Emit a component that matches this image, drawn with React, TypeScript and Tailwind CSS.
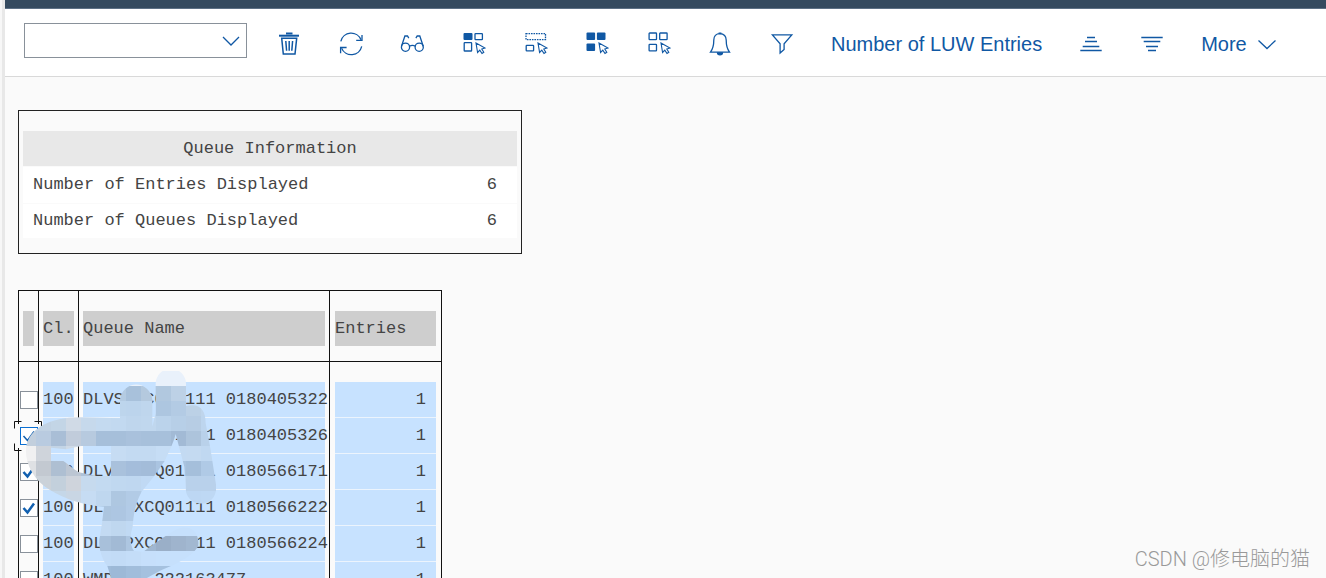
import type { ReactNode } from 'react'

interface QueueRow {
  id: string
  client: string
  name: string
  entries: number
  checked: boolean
  focused?: boolean
}

const summary = [
  { label: 'Number of Entries Displayed', value: 6 },
  { label: 'Number of Queues Displayed', value: 6 },
]

const queues: QueueRow[] = [
  { id: 'q1', client: '100', name: 'DLVSPXCQ01111 0180405322', entries: 1, checked: false },
  { id: 'q2', client: '100', name: 'DLVSPXCQ01111 0180405326', entries: 1, checked: true, focused: true },
  { id: 'q3', client: '100', name: 'DLVSPXCQ01111 0180566171', entries: 1, checked: true },
  { id: 'q4', client: '100', name: 'DLVSPXCQ01111 0180566222', entries: 1, checked: true },
  { id: 'q5', client: '100', name: 'DLVSPXCQ01111 0180566224', entries: 1, checked: false },
  { id: 'q6', client: '100', name: 'WMD    222163477', entries: 1, checked: false },
]

// one line per mosaic row, one colour per block, left to right
const mosaic = [
  'e9f1fb e9f1fb e9f1fb e9f1fb e9f1fb e9f1fb e9f1fb e9f1fb e9f1fb e9f1fb e9f1fb e9f1fb e9f1fb',
  'c8dff6 c8dff6 c8dff6 c8dff6 c8dff6 c8dff6 b4cbe2 a8c1db b4c9de b1c8df bdd1e6 bdd1e6 bdd1e6',
  'c8dff6 c8dff6 c8dff6 c8dff6 c8dff6 c8dff6 bdd5ec bcd4ec bfd6ed adc6e0 b3cbe4 bcd1e6 bfd5ec',
  'c4d4e4 c1d2e3 c3d5e6 d0dae6 c6d9ec c4daf0 c2d9f0 bfd6ed c0d7ee bbd3eb b7cfe7 b7cde4 bdd5ee',
  'c2cfdd b9cbe0 a9bed6 c1ccdb b7cadf a6bfda a6bfda a9c1dc a7c0db a7c0db a2bad5 adc4dc b9d1ea',
  'f0f0f1 cfd4db c3d4e5 cfdae6 c6daee c6dcf3 c6dcf3 c3daf2 c3daf2 c6ddf5 c3daf2 c4daf1 c0d8f1',
  'dfe1e4 c3c9d1 aebfd2 bcc6d3 aec2d9 a9c1dc a9c1dc a4bddb a3bcd9 aac4e1 a9c3df a5bfdb b0cae6',
  'd9dde2 cbd2d9 c3d0dc cfd4dc c6daee c3daf1 c0d8f0 bfd7f0 c0d9f4 c2daf4 c2daf4 b9d1eb b9d1eb',
  'c8d5e2 c8d5e2 c5d7e8 c9d6e4 c6dcf3 bfd7ef aec7e1 b2cbe6 bad4ef c2daf4 c2daf4 bdd7f3 bed8f4',
  'c2d9f1 c2d9f1 c2d9f1 c2d9f1 c2d9f1 acc5df adc6e2 b2cbe7 c2d9f1 c2d9f1 c2d9f1 c2d9f1 c2d9f1',
  'c2d9f1 c2d9f1 c2d9f1 c2d9f1 c2d9f1 c3daf2 bfd7ef c0d9f3 c6e0fc c6e0fc c6e0fc c6e0fc c6e0fc',
  'a5bdd7 a5bdd7 a5bdd7 a5bdd7 a5bdd7 a8c0da a2bad5 adc6e1 a0b7d1 9aafc8 9fb4cd a2b8d1 a2b8d1',
  'bcd5ef bcd5ef bcd5ef bcd5ef bcd5ef c3dcf7 c2dbf6 c4ddf8 c6dffb c6e0fc c6e0fc c6e0fc c6e0fc',
  '9fbbd9 9fbbd9 9fbbd9 9fbbd9 9fbbd9 9fbbd9 9db9d7 a1bddb a5c1df a5c1df a5c1df a5c1df a5c1df',
].map((line) => line.split(' '))

const cursorPath = 'M14 11l9 5-3.2 1 2 3.3-1.8 1.2-2.2-3.3-2.2 2.3z'

function Icon({ children }: { children: ReactNode }) {
  return (
    <svg viewBox="0 0 24 24" className="h-6 w-6 shrink-0" fill="none" stroke="currentColor" strokeWidth="1.3" aria-hidden="true">
      {children}
    </svg>
  )
}

function ToolButton({ label, children }: { label: string; children: ReactNode }) {
  return (
    <button type="button" aria-label={label} title={label} className="shrink-0 hover:text-[#0a6ed1]">
      <Icon>{children}</Icon>
    </button>
  )
}

function Toolbar() {
  return (
    <div className="flex h-[68px] items-center border-b border-[#d9d9d9] bg-white pt-0.5 pl-[19px] font-['Liberation_Sans',Arial,sans-serif] text-xl text-[#1058a4]">
      <div className="relative mb-1.5 h-[35px] w-[223px] shrink-0">
        <select aria-label="Command" className="block h-full w-full appearance-none border border-[#89919a] bg-white px-2 outline-none">
          <option value=""></option>
        </select>
        <span className="pointer-events-none absolute top-1.5 right-1">
          <Icon>
            <path d="M4 8l8 8 8-8" />
          </Icon>
        </span>
      </div>

      <div className="ml-[30px] flex min-w-0 items-center gap-[37px]">
        <div className="flex w-[517px] shrink-0 items-center justify-between">
          <ToolButton label="Delete">
            <path d="M9 1.5h6.5" strokeWidth="2" />
            <path d="M2 3.7h20" strokeWidth="2" />
            <path d="M4.7 6.2h15L18 22H6.3z" strokeWidth="1.5" />
            <path d="M8.8 9l.8 9.8M12.2 9v9.8M15.6 9l-.8 9.8" strokeWidth="1.5" />
          </ToolButton>
          <ToolButton label="Refresh">
            <path d="M1.8 9.3A10.6 10.6 0 0 1 22 7.8M22.7 14.3A10.6 10.6 0 0 1 2.6 16.2" />
            <path d="M23 3v5.3h-5.8M1.6 21.3V15.5h6" />
          </ToolButton>
          <ToolButton label="Display">
            <circle cx="5.5" cy="15.2" r="4.1" />
            <circle cx="19.2" cy="15.2" r="4.1" />
            <path d="M9.4 14.3c1.8-1 4.2-1 6 0M1.5 14.2L4.9 4h2.6l1.3 2.2M23.2 14.2L19.8 4h-2.6l-1.3 2.2" />
          </ToolButton>
          <ToolButton label="Select block">
            <rect x="1.5" y="1" width="9" height="7" rx="1" fill="currentColor" stroke="none" />
            <rect x="13" y="1.6" width="7.4" height="6" rx="0.6" />
            <rect x="2.2" y="10.7" width="7.4" height="8.3" rx="0.6" />
            <path d={cursorPath} strokeWidth="1.1" />
          </ToolButton>
          <ToolButton label="Deselect block">
            <rect x="2" y="1.6" width="19.5" height="6" strokeDasharray="1.6 0.9" />
            <rect x="2.2" y="13.3" width="7.4" height="5.6" rx="0.6" />
            <path d={cursorPath} strokeWidth="1.1" />
          </ToolButton>
          <ToolButton label="Select all">
            <g fill="currentColor" stroke="none">
              <rect x="1.5" y="0.4" width="8.6" height="7.6" rx="1" />
              <rect x="11.9" y="0.4" width="8.6" height="7.6" rx="1" />
              <rect x="1.5" y="11.4" width="8.6" height="7.6" rx="1" />
            </g>
            <path d={cursorPath} strokeWidth="1.1" />
          </ToolButton>
          <ToolButton label="Deselect all">
            <rect x="2.1" y="1" width="7.4" height="6.6" rx="0.6" />
            <rect x="12.7" y="1" width="7.4" height="6.6" rx="0.6" />
            <rect x="2.1" y="12.3" width="7.4" height="6.6" rx="0.6" />
            <path d={cursorPath} strokeWidth="1.1" />
          </ToolButton>
          <ToolButton label="Alerts">
            <path d="M12 1.6c-4 0-6.2 2.8-6.2 6.4 0 5.5-.5 8.3-3.3 12.2h19c-2.8-3.9-3.3-6.7-3.3-12.2 0-3.6-2.2-6.4-6.2-6.4z" />
            <path d="M10.6 1.4h2.8" strokeWidth="1.8" />
            <path d="M9.5 20.8a2.5 2 0 0 0 5 0z" fill="currentColor" />
          </ToolButton>
          <ToolButton label="Filter">
            <path d="M2.4 2.8h19.4l-7.7 9v5.6l-4 3.6v-9.2z" />
          </ToolButton>
        </div>

        <button type="button" className="shrink-0 whitespace-nowrap">
          Number of LUW Entries
        </button>
        <ToolButton label="Sort ascending">
          <path d="M8 5.5h8M6 9.5h12M3.7 14.5h16.6M1.3 18.5h21.4" />
        </ToolButton>
        <ToolButton label="Sort descending">
          <path d="M1.3 5.5h21.4M3.7 9.5h16.6M6 14.5h12M8 18.5h8" />
        </ToolButton>
        <button type="button" className="flex shrink-0 items-center gap-2">
          More
          <Icon>
            <path d="M3.5 8.5l8.5 8 8.5-8" />
          </Icon>
        </button>
      </div>
    </div>
  )
}

function QueueInformation() {
  return (
    <section className="w-[504px] border border-[#222] px-1 pt-5 pb-[15px]">
      <table className="w-full border-collapse">
        <thead>
          <tr>
            <th colSpan={2} className="h-9 p-0 font-normal">
              <div className="mb-px h-[35px] bg-[#e8e8e8] leading-[35px]">Queue Information</div>
            </th>
          </tr>
        </thead>
        <tbody>
          {summary.map((item) => (
            <tr key={item.label} className="h-9 border-b border-[#fafafa] bg-white last:h-[35px] last:border-b-0">
              <td className="p-0 pl-2.5">{item.label}</td>
              <td className="p-0 pr-5 text-right">{item.value}</td>
            </tr>
          ))}
        </tbody>
      </table>
    </section>
  )
}

function RowCheckbox({ row }: { row: QueueRow }) {
  return (
    <span className="relative mb-px block h-[18px] w-[18px]">
      {row.focused && (
        <svg viewBox="0 0 28 30" className="absolute -top-[6px] -left-[6px] h-[30px] w-7" fill="none" stroke="#111" strokeWidth="1" aria-hidden="true">
          <path d="M1 3h26v24H1z" fill="#fafafa" stroke="none" />
          <path d="M.5 7.5v-7h7M20.5.5h7v7M.5 22.5v7h7M27.5 22.5v7h-7" />
        </svg>
      )}
      <input
        type="checkbox"
        aria-label={`Select queue ${row.name}`}
        defaultChecked={row.checked}
        className={`peer relative block h-[18px] w-[18px] appearance-none border bg-white ${row.focused ? 'border-[#0a6ed1]' : 'border-[#89919a]'}`}
      />
      <svg viewBox="0 0 18 18" className="pointer-events-none absolute top-0 left-0 hidden h-[18px] w-[18px] peer-checked:block" fill="none" stroke="#1160b0" strokeWidth={row.focused ? 1.5 : 2.5} aria-hidden="true">
        <path d="M3.5 9l4 4.5 6.500-9" />
      </svg>
    </span>
  )
}

function Mosaic() {
  return (
    <svg viewBox="63 33 600 621" className="pointer-events-none absolute top-[81px] left-[3px] h-[207px] w-[200px]" aria-hidden="true">
      <defs>
        <clipPath id="brush">
          <path
            d="M360 360V118a49 52 0 0 1 97 0V200L467 160V72a45 46 0 0 1 91 0V138C600 128 617 150 617 190L632 270L649 380C649 445 570 445 558 395L553 320L527 222C520 250 505 280 494 303L465 345L425 395C405 430 400 470 398 500C388 530 390 555 402 573L430 575C460 555 490 530 530 508C575 490 600 520 594 560C570 595 520 615 480 632L430 660H335L322 618C300 590 294 550 300 528L306 490L312 440C250 435 200 420 150 390C100 360 75 310 78 265C85 205 150 172 240 172L360 175V200zM198 268L153 263V303H190C215 320 225 333 243 338L290 348H333V258H243z"
            clipRule="evenodd"
          />
        </clipPath>
      </defs>
      <g clipPath="url(#brush)" shapeRendering="crispEdges">
        {mosaic.map((line, row) =>
          line.map((color, col) => (
            <rect key={`${row}-${col}`} x={63 + col * 45} y={33 + row * 45} width="45" height="45" fill={`#${color}`} />
          )),
        )}
      </g>
    </svg>
  )
}

function QueueTable() {
  return (
    <div className="relative w-[424px]">
      <table className="w-full table-fixed border-separate border-spacing-0 border-t border-r border-[#111]">
        <colgroup>
          <col className="w-5" />
          <col className="w-10" />
          <col className="w-[251px]" />
          <col />
        </colgroup>
        <thead>
          <tr className="text-left">
            {['', 'Cl.', 'Queue Name', 'Entries'].map((title) => (
              <th key={title} className="border-b border-l border-[#111] px-1 pt-5 pb-[15px] font-normal last:px-[5px]">
                <div className="h-[35px] bg-[#cecece] leading-[35px] whitespace-pre">{title}</div>
              </th>
            ))}
          </tr>
        </thead>
        <tbody>
          <tr aria-hidden="true">
            {[0, 1, 2, 3].map((cell) => (
              <td key={cell} className="h-5 border-l border-[#111] p-0" />
            ))}
          </tr>
          {queues.map((row) => (
            <tr key={row.id} className="h-9">
              <td className="border-l border-[#111] p-0 pl-px">
                <RowCheckbox row={row} />
              </td>
              <td className="border-l border-[#111] px-1 py-0">
                <div className="h-9 border-b border-[#ecf4fd] bg-[#c7e2ff] leading-[35px]">{row.client}</div>
              </td>
              <td className="border-l border-[#111] px-1 py-0">
                <div className="h-9 border-b border-[#ecf4fd] bg-[#c7e2ff] leading-[35px] whitespace-pre">{row.name}</div>
              </td>
              <td className="border-l border-[#111] px-[5px] py-0">
                <div className="h-9 border-b border-[#ecf4fd] bg-[#c7e2ff] pr-2.5 text-right leading-[35px]">{row.entries}</div>
              </td>
            </tr>
          ))}
        </tbody>
      </table>
      <Mosaic />
    </div>
  )
}

export default function App() {
  return (
    <div className="relative flex h-screen overflow-hidden bg-[#fafafa]">
      <div className="w-[5px] shrink-0 border-r-[3px] border-[#e8e8e8] bg-[#f7f7f7]" />
      <div className="min-w-0 flex-1">
        <header className="h-[9px] border-b border-[#5d7085] bg-[#354a5f]" />
        <Toolbar />
        <main className="flex flex-col gap-9 pt-[33px] pl-[13px] font-['Liberation_Mono','Courier_New',monospace] text-[17px] text-[#444]">
          <QueueInformation />
          <QueueTable />
        </main>
      </div>
      <p className="absolute right-4 bottom-1 font-[Roboto,'Noto_Sans_CJK_SC',sans-serif] text-[20px] font-light text-[#999]">CSDN @修电脑的猫</p>
    </div>
  )
}
